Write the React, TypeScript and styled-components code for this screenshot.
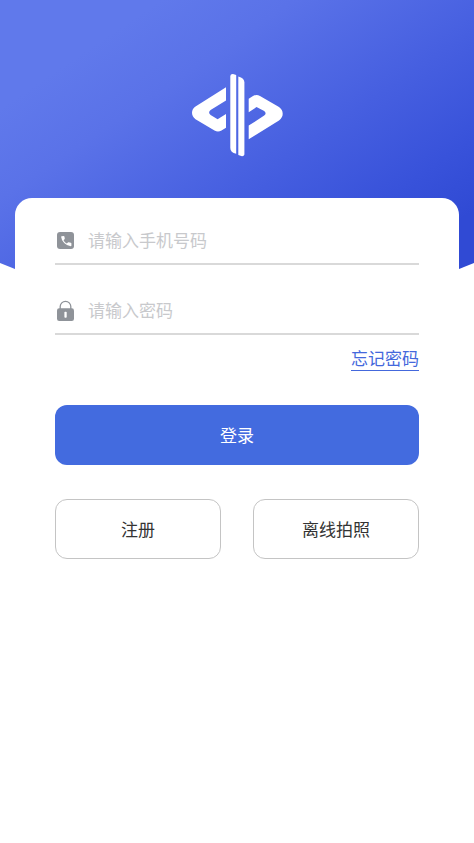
import React from "react";
import styled, { createGlobalStyle } from "styled-components";

const GlobalStyle = createGlobalStyle`
  * { box-sizing: border-box; }
  body {
    margin: 0;
    background: #fff;
    font-family: "Noto Sans CJK SC", "Noto Sans", sans-serif;
    font-size: 17px;
    line-height: 24px;
  }
  button, input { font: inherit; }
`;

const Page = styled.main`
  min-height: 100vh;
  background: #fff;
`;

const Hero = styled.header`
  height: 358px;
  padding-top: 72px;
  display: flex;
  justify-content: center;
  align-items: flex-start;
  background: linear-gradient(146deg, #6079eb 90px, #5a72e8 165px, #465fe0 290px, #3852da 380px, #304ad4 440px);
  clip-path: polygon(0 0, 100% 0, 100% 263px, 50% 100%, 0 263px);
`;

const Card = styled.form`
  position: relative;
  margin: -160px 15px 0;
  padding: 0 40px 40px;
  display: flex;
  flex-direction: column;
  background: #fff;
  border-radius: 17px 17px 0 0;
`;

const Field = styled.label`
  height: 70px;
  padding-bottom: 11px;
  display: flex;
  align-items: flex-end;
  gap: 12px;
  border-bottom: 2px solid #d9d9d9;

  &:first-child {
    height: 67px;
  }
`;

const FieldIcon = styled.svg`
  width: 21px;
  height: 22px;
  flex: none;
`;

const TextInput = styled.input`
  flex: 1;
  min-width: 0;
  height: 24px;
  padding: 0;
  border: 0;
  outline: 0;
  background: transparent;
  color: #333;

  &::placeholder {
    color: #c8c9cc;
    opacity: 1;
  }
`;

const ForgotLink = styled.a`
  align-self: flex-end;
  margin-top: 11px;
  color: #4468dc;
  text-decoration: none;
  border-bottom: 1px solid #4468dc;
`;

const Button = styled.button<{ $primary?: boolean }>`
  height: 60px;
  padding: 0;
  flex: 1 1 0;
  border: ${(p) => (p.$primary ? "0" : "1px solid #c4c4c4")};
  border-radius: 12px;
  background: ${(p) => (p.$primary ? "#436bdf" : "#fff")};
  color: ${(p) => (p.$primary ? "#fff" : "#333")};
  cursor: pointer;
`;

const ButtonRow = styled.div`
  display: flex;
  gap: 32px;
  margin-top: 34px;
`;

const Logo = () => (
  <svg width="94" height="86" viewBox="0 0 94 86" fill="#fff" role="img" aria-label="Logo">
    <path d="M36 15.2V28.6L20.6 38Q17.6 40.6 20.6 43.1L27.6 47.2L36 42V55.7L31.5 58.5Q28 60.4 24.5 58.5L5.5 47.3Q2 44.5 2 40.8Q2 37 5.5 34.5Z" />
    <path d="M40.3 4Q40.5 1.8 43 2L46.2 3V81.8Q40.3 80.5 40.3 76Z" />
    <path d="M48.3 4.4Q54.4 6 54.4 10.5V82.5Q54 84.4 52 84.3L48.3 83Z" />
    <path d="M58.7 26.7L63 24Q66.5 22.2 70 24L89 35Q92.7 37.7 92.7 41.8Q92.7 45.7 89 48.4L58.7 67.3V53.6L74.2 43.6Q77 41.2 74.2 38.9L66.5 35.1L58.7 40.3Z" />
  </svg>
);

const PhoneIcon = () => (
  <FieldIcon viewBox="0 0 21 22" aria-hidden="true">
    <rect x="2" y="2" width="17" height="17" rx="3" fill="#8f9399" />
    <path
      d="M6.6 6.2L8.7 6Q9.3 6 9.4 6.5L9.8 8.5Q9.8 8.9 9.5 9.2L8.5 10.2Q9.6 12.4 11.8 13.5L12.9 12.5Q13.2 12.2 13.6 12.3L15.8 12.7Q16.4 12.9 16.4 13.4V15.6Q16.4 16.2 15.8 16.2Q12.2 16.1 9.2 13.1Q6.4 10.3 6.1 6.8Q6.1 6.3 6.6 6.2Z"
      fill="#fff"
    />
  </FieldIcon>
);

const LockIcon = () => (
  <FieldIcon viewBox="0 0 21 22" aria-hidden="true">
    <path d="M5.2 9V6.6A5.3 5.3 0 0 1 15.8 6.6V9" fill="none" stroke="#8f9399" strokeWidth="1.3" />
    <rect x="2" y="8.3" width="17" height="12.7" rx="2.2" fill="#8f9399" />
    <rect x="9.4" y="11.7" width="2.3" height="6" rx="0.8" fill="#fff" />
  </FieldIcon>
);

export default function App() {
  return (
    <Page>
      <GlobalStyle />
      <Hero>
        <Logo />
      </Hero>
      <Card onSubmit={(e) => e.preventDefault()}>
        <Field>
          <PhoneIcon />
          <TextInput type="tel" placeholder="请输入手机号码" aria-label="请输入手机号码" />
        </Field>
        <Field>
          <LockIcon />
          <TextInput type="password" placeholder="请输入密码" aria-label="请输入密码" />
        </Field>
        <ForgotLink href="#forgot">忘记密码</ForgotLink>
        <ButtonRow>
          <Button type="submit" $primary>登录</Button>
        </ButtonRow>
        <ButtonRow>
          <Button type="button">注册</Button>
          <Button type="button">离线拍照</Button>
        </ButtonRow>
      </Card>
    </Page>
  );
}
